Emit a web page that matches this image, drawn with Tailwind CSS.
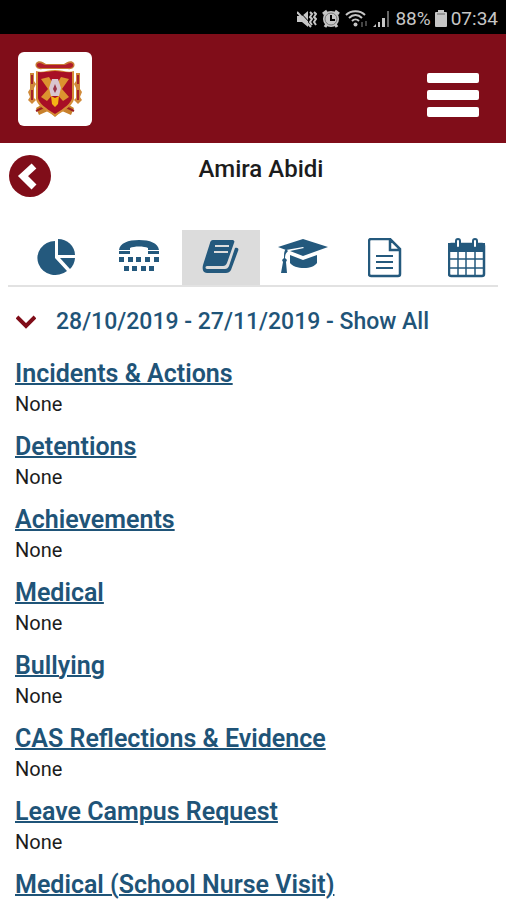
<!DOCTYPE html>
<html lang="en">
<head>
  <meta charset="UTF-8" />
  <meta name="viewport" content="width=device-width, initial-scale=1.0" />
  <title>Amira Abidi</title>
  <script src="https://cdn.jsdelivr.net/npm/@tailwindcss/browser@4"></script>
</head>
<body class="min-h-screen bg-white font-[Roboto,sans-serif] text-[#1c1c1c]">

  <!-- Status bar -->
  <div class="flex h-[34px] items-center justify-end gap-1 bg-black pt-1 pr-2 text-[19px] text-[#c6c6c6]">
    <svg class="h-5 w-5" viewBox="0 0 20 20" fill="currentColor">
      <path d="M0 7h5l6-5v16l-6-5H0z" />
      <path d="M1 1l14 15" stroke="#000" stroke-width="1" />
      <path d="M0 3l14 15" stroke="currentColor" stroke-width="2" />
      <path d="M13 3l2 2-2 3 2 2-2 3 2 3M17 3l2 2-2 3 2 2-2 3 2 3" fill="none" stroke="currentColor" stroke-width="2" />
    </svg>
    <svg class="h-5 w-5" viewBox="0 0 20 20" fill="currentColor">
      <circle cx="10" cy="10" r="8" />
      <path d="M2 5l4-3M18 5l-4-3M4 18l2-3M16 18l-2-3" stroke="currentColor" stroke-width="3" />
      <path d="M10 6v5h4" fill="none" stroke="#000" stroke-width="2" />
      <circle cx="10" cy="10" r="6" fill="none" stroke="#777" stroke-width="1" />
    </svg>
    <svg class="h-5 w-6" viewBox="0 0 24 20" fill="none" stroke="currentColor" stroke-width="2">
      <path d="M1 6c5-5 14-5 19 0M4 9c4-4 9-4 13 0M7 12c2-2 5-2 7 0" />
      <circle cx="10.500" cy="15.500" r="2" fill="currentColor" stroke="none" />
      <path d="M17 18v-5M21 12v5" stroke="#444" stroke-width="2" />
    </svg>
    <svg class="h-5 w-[18px]" viewBox="0 0 18 20" fill="currentColor">
      <path d="M0 18l3-3v3zM5 13h2v5H5zM9 9h3v9H9z" />
      <path d="M14 2h2v16h-2z" fill="#666" />
    </svg>
    <span>88%</span>
    <svg class="h-5 w-3" viewBox="0 0 12 20" fill="currentColor">
      <path d="M3 1h6v2h2a1 1 0 011 1v13a1 1 0 01-1 1H1a1 1 0 01-1-1V4a1 1 0 011-1h2z" />
      <path d="M2 5h8" stroke="#666" />
    </svg>
    <span>07:34</span>
  </div>

  <!-- Header -->
  <header class="flex h-[109px] items-center justify-between bg-[#800d19] pr-[27px] pl-[18px]">
    <a href="#" aria-label="Home" class="flex h-[74px] w-[74px] items-center justify-center rounded-md bg-white">
      <svg class="h-[58px] w-[56px]" viewBox="0 0 56 58">
        <path d="M9 48l10-6 9 7 9-7 10 6-3 7-9-4-7 6-7-6-9 4z" fill="#c8812c" />
        <path d="M9 51l10-5M47 51l-10-5" stroke="#9b1c20" stroke-width="2" />
        <path d="M3 13h4v8l2 3-2 4v10l2 2-4 4-4-4 2-3-2-5 2-3z" fill="#d08a3a" />
        <path d="M53 13h-4v8l-2 3 2 4v10l-2 2 4 4 4-4-2-3 2-5-2-3z" fill="#d08a3a" />
        <path d="M5 15v9M5 30v10M51 15v9M51 30v10" stroke="#a4232b" stroke-width="2" />
        <path d="M9 11c6 2 12-1 19-1 7 0 13 3 19 1v28c-1 6-8 11-19 17C17 50 10 45 9 39z" fill="#d58d36" />
        <path d="M11 12c6 1 11-1 17-1 6 0 11 2 17 1v26c-1 5-7 10-17 16-10-6-16-11-17-16z" fill="#a80f25" />
        <path d="M9 3c3-4 8 0 10 1h18c2-1 7-5 10-1 2 4-2 7-6 6H15c-4 1-8-2-6-6z" fill="#c77b33" />
        <path d="M10 4c3-3 6 1 9 1h18c3 0 6-4 9-1 1 4-3 4-6 4H16c-3 0-7 0-6-4z" fill="#b01c2b" />
        <path d="M14 19l8-2 6 10 6-10 8 2-7 10 7 8-6 4-8-9-8 9-6-4 7-8z" fill="#dc932f" />
        <path d="M25 19h6l3 9-2 8h-8l-2-8z" fill="#d9c6cf" />
        <path d="M26 29l2-5 2 5-2 4z" fill="#9a3448" />
        <path d="M24 36l4 2 4-2-1 8-3 3-3-3z" fill="#f5b315" />
      </svg>
    </a>
    <button type="button" aria-label="Menu" class="pt-3 text-white">
      <svg class="h-[44px] w-[52px]" viewBox="0 0 52 44" fill="currentColor">
        <rect width="52" height="10" rx="2" />
        <rect y="17" width="52" height="10" rx="2" />
        <rect y="34" width="52" height="10" rx="2" />
      </svg>
    </button>
  </header>

  <!-- Student name -->
  <div class="grid grid-cols-[42px_1fr_42px] items-start px-[9px] pt-3">
    <a href="#" aria-label="Back">
      <svg class="h-[42px] w-[42px]" viewBox="0 0 42 42">
        <circle cx="21" cy="21" r="21" fill="#800d19" />
        <path d="M25 11L14 21l11 11" fill="none" stroke="#fff" stroke-width="7" />
      </svg>
    </a>
    <h1 class="pl-4 text-center text-2xl leading-7 font-medium">Amira Abidi</h1>
  </div>

  <!-- Tabs -->
  <nav class="mx-2 mt-[33px] border-b-2 border-[#e2e2e2] text-[#24597d]">
    <div class="-mr-2 ml-[10px] grid h-[55px] grid-cols-6 gap-1">
      <a href="#" aria-label="Attendance" class="flex items-center justify-center">
        <svg class="h-10 w-10" viewBox="0 0 40 40" fill="currentColor">
          <path d="M18 3v17l12 13A18 17 0 1118 3z" />
          <path d="M21 1a17 16 0 0117 16H21z" />
          <path d="M23 20h15a17 17 0 01-5 11z" />
        </svg>
      </a>
      <a href="#" aria-label="Contact" class="flex items-center justify-center">
        <svg class="h-10 w-10" viewBox="0 0 40 40" fill="currentColor">
          <path d="M0 12C1 5 9 2 20 2s19 3 20 10H29v-2c-4-2-14-2-18 0v2z" />
          <path d="M0 13h11v3H0zM29 13h11v3H29z" />
          <path d="M0 19h5v5H0zM9 19h5v5H9zM17 19h5v5h-5zM26 19h5v5h-5zM35 19h5v5h-5zM5 28h5v5H5zM13 28h5v5h-5zM22 28h5v5h-5zM30 28h5v5h-5z" />
        </svg>
      </a>
      <a href="#" aria-label="Records" aria-current="page" class="flex items-center justify-center bg-[#dcdcdc]">
        <svg class="h-10 w-10" viewBox="0 0 40 40">
          <path d="M12 2h19c2 0 3 1 2 3l-7 20c-1 2-2 3-4 3H6c-2 0-2 3 0 3h18c2 0 3-1 4-3l6-18c3-1 4 1 3 3l-7 19c-1 2-3 3-5 3H6c-4 0-5-4-4-8l7-22c0-1 1-3 3-3z" fill="currentColor" />
          <path d="M14 8h14M13 14h14" stroke="#dcdcdc" stroke-width="2" />
        </svg>
      </a>
      <a href="#" aria-label="Grades" class="flex items-center justify-center">
        <svg class="h-10 w-[50px]" viewBox="0 0 50 40" fill="currentColor">
          <path d="M25 1l25 8-25 9-13-5 14-3-1-1-17 3-8-3z" />
          <path d="M12 17l13 5 14-5v8c-2 3-7 5-13 5s-12-2-14-5z" />
          <path d="M7 10l3 3c-2 2-3 4-3 7l2 2-1 2 1 11H3l2-11-1-2 2-2c0-4 0-7 2-9z" />
        </svg>
      </a>
      <a href="#" aria-label="Documents" class="flex items-center justify-center">
        <svg class="h-10 w-[34px]" viewBox="0 0 34 40" fill="none" stroke="currentColor" stroke-width="2">
          <path d="M3 1h19l10 10v25a2 2 0 01-2 2H3a2 2 0 01-2-2V3a2 2 0 012-2zM22 1v11h10" stroke-width="2.500" />
          <path d="M8 18h17M8 24h17M8 30h17" />
        </svg>
      </a>
      <a href="#" aria-label="Calendar" class="flex items-center justify-center">
        <svg class="h-10 w-[38px]" viewBox="0 0 38 40" fill="none" stroke="currentColor" stroke-width="2">
          <rect x="1" y="6" width="35" height="32" rx="2" stroke-width="2.500" />
          <path d="M1 6h35v7H1z" fill="currentColor" />
          <path d="M10 14v24M18 14v24M27 14v24M1 21h35M1 30h35" stroke-width="1.500" />
          <rect x="8" y="1" width="4" height="9" rx="2" fill="#fff" />
          <rect x="25" y="1" width="4" height="9" rx="2" fill="#fff" />
        </svg>
      </a>
    </div>
  </nav>

  <main class="px-[15px] text-[#1f5478]">
    <button type="button" class="mt-5 flex items-center text-[23px] leading-[30px] font-medium">
      <svg class="mr-5 ml-px h-[14px] w-5" viewBox="0 0 20 14" fill="none" stroke="#800d19" stroke-width="4">
        <path d="M1 2l9 9 9-9" />
      </svg>
      28/10/2019 - 27/11/2019 - Show All
    </button>

    <div class="mt-[22px] space-y-[15px]">
      <section>
        <h2 class="text-[25px] leading-[30px] font-semibold"><a href="#" class="underline decoration-2">Incidents &amp; Actions</a></h2>
        <p class="pt-[2px] text-xl leading-[26px] text-[#1c1c1c]">None</p>
      </section>
      <section>
        <h2 class="text-[25px] leading-[30px] font-semibold"><a href="#" class="underline decoration-2">Detentions</a></h2>
        <p class="pt-[2px] text-xl leading-[26px] text-[#1c1c1c]">None</p>
      </section>
      <section>
        <h2 class="text-[25px] leading-[30px] font-semibold"><a href="#" class="underline decoration-2">Achievements</a></h2>
        <p class="pt-[2px] text-xl leading-[26px] text-[#1c1c1c]">None</p>
      </section>
      <section>
        <h2 class="text-[25px] leading-[30px] font-semibold"><a href="#" class="underline decoration-2">Medical</a></h2>
        <p class="pt-[2px] text-xl leading-[26px] text-[#1c1c1c]">None</p>
      </section>
      <section>
        <h2 class="text-[25px] leading-[30px] font-semibold"><a href="#" class="underline decoration-2">Bullying</a></h2>
        <p class="pt-[2px] text-xl leading-[26px] text-[#1c1c1c]">None</p>
      </section>
      <section>
        <h2 class="text-[25px] leading-[30px] font-semibold"><a href="#" class="underline decoration-2">CAS Reflections &amp; Evidence</a></h2>
        <p class="pt-[2px] text-xl leading-[26px] text-[#1c1c1c]">None</p>
      </section>
      <section>
        <h2 class="text-[25px] leading-[30px] font-semibold"><a href="#" class="underline decoration-2">Leave Campus Request</a></h2>
        <p class="pt-[2px] text-xl leading-[26px] text-[#1c1c1c]">None</p>
      </section>
      <section>
        <h2 class="text-[25px] leading-[30px] font-semibold"><a href="#" class="underline decoration-2">Medical (School Nurse Visit)</a></h2>
      </section>
    </div>
  </main>

</body>
</html>
